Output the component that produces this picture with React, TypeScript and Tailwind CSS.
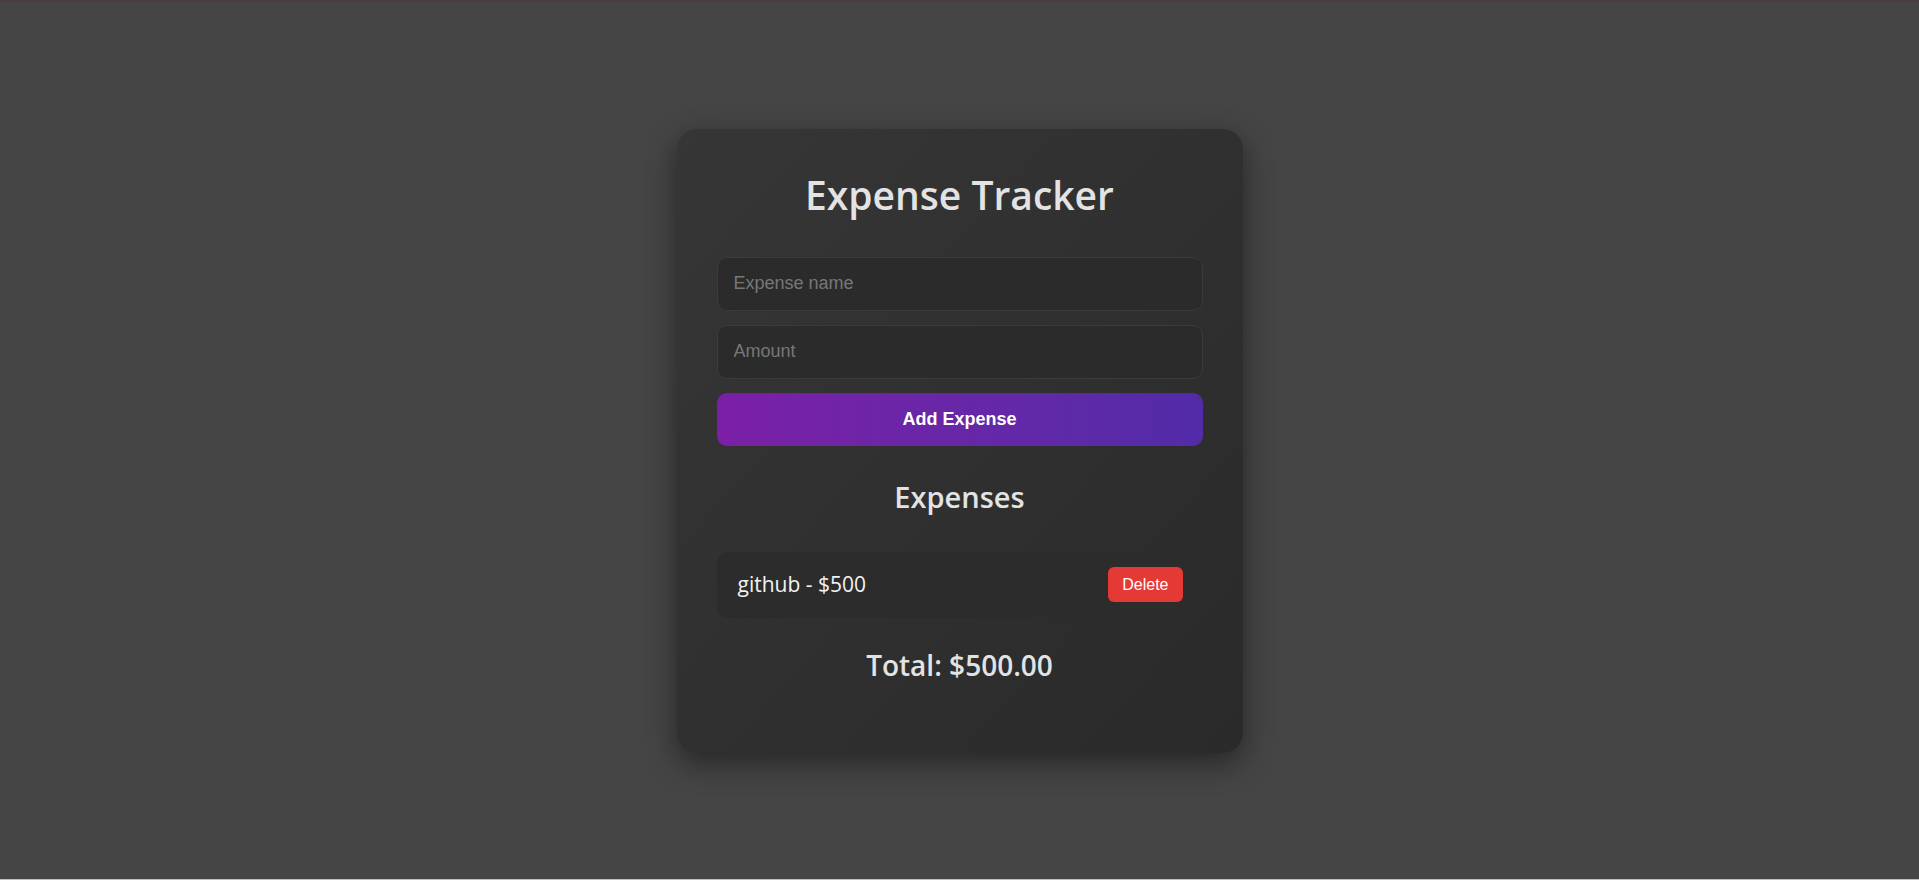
import { useState } from "react";

type Expense = { id: number; name: string; amount: number };

export default function App() {
  const [name, setName] = useState("");
  const [amount, setAmount] = useState("");
  const [expenses, setExpenses] = useState<Expense[]>([
    { id: 1, name: "github", amount: 500 },
  ]);

  const addExpense = () => {
    const value = parseFloat(amount);
    if (!name.trim() || isNaN(value)) return;
    setExpenses([...expenses, { id: Date.now(), name: name.trim(), amount: value }]);
    setName("");
    setAmount("");
  };

  const total = expenses.reduce((sum, e) => sum + e.amount, 0);

  return (
    <div className="flex flex-col">
      <div className="h-[879px] bg-[#454545] border-t-2 border-[#4c3b43] flex items-center justify-center">
        <div className="w-[566px] rounded-[20px] bg-gradient-to-br from-[#363636] to-[#2a2a2a] shadow-[0_10px_30px_rgba(0,0,0,0.45)] px-10 pt-[42px] pb-[71px] font-['Open_Sans',sans-serif] text-[#e3e3e3]">
          <h1 className="text-center text-[39px] leading-[48px] font-semibold mb-[38px]">Expense Tracker</h1>

          <div className="flex flex-col gap-[14px]">
            <input
              value={name}
              onChange={(e) => setName(e.target.value)}
              placeholder="Expense name"
              className="h-[54px] w-full rounded-[10px] bg-[#2b2b2b] border border-[#3b3b3b] px-4 text-[18px] text-[#e3e3e3] placeholder:text-[#777777] font-['Liberation_Sans',Arial,sans-serif] outline-none"
            />
            <input
              value={amount}
              onChange={(e) => setAmount(e.target.value)}
              placeholder="Amount"
              className="h-[54px] w-full rounded-[10px] bg-[#2b2b2b] border border-[#3b3b3b] px-4 text-[18px] text-[#e3e3e3] placeholder:text-[#777777] font-['Liberation_Sans',Arial,sans-serif] outline-none"
            />
            <button
              onClick={addExpense}
              className="h-[53px] w-full rounded-[10px] bg-gradient-to-r from-[#7b1fa6] to-[#522ba8] text-white text-[18px] font-bold font-['Liberation_Sans',Arial,sans-serif]"
            >
              Add Expense
            </button>
          </div>

          <h2 className="mt-[34px] text-center text-[29px] leading-[34px] font-semibold">Expenses</h2>

          <ul className="mt-[38px] flex flex-col gap-3">
            {expenses.map((e) => (
              <li
                key={e.id}
                className="h-[66px] rounded-[10px] bg-[#2c2c2c] pl-[21px] pr-5 flex items-center justify-between"
              >
                <span className="text-[21px] text-[#f2f2f2]">
                  {e.name} - ${e.amount}
                </span>
                <button
                  onClick={() => setExpenses(expenses.filter((x) => x.id !== e.id))}
                  className="h-[35px] px-[14px] rounded-md bg-[#e53935] text-white text-[16px] font-['Liberation_Sans',Arial,sans-serif]"
                >
                  Delete
                </button>
              </li>
            ))}
          </ul>

          <h3 className="mt-[30px] text-center text-[28px] leading-[34px] font-semibold">
            Total: ${total.toFixed(2)}
          </h3>
        </div>
      </div>
      <div className="h-px bg-[#bdbdbd]" />
    </div>
  );
}
